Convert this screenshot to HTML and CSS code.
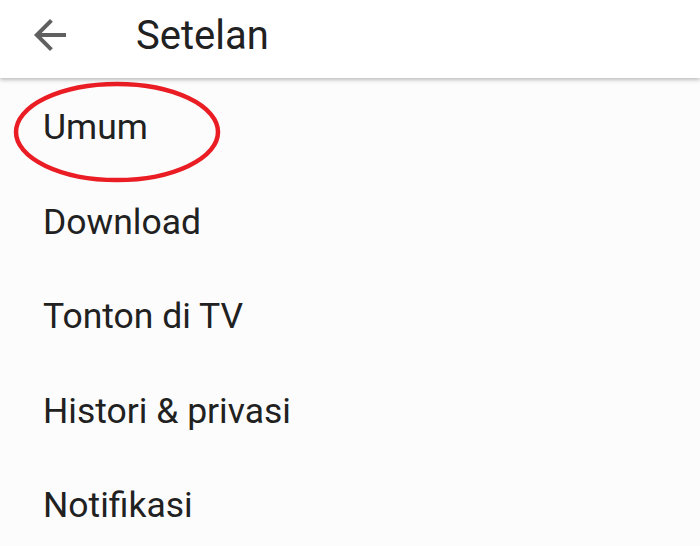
FILE: index.html
```html
<!DOCTYPE html>
<html>
    <head>
        <title>Setelan</title>
        <link rel="stylesheet" href="styles.css">
    </head>
    <body>
        <div class="topBar">
            <svg class="backIcon" viewBox="0 0 24 24"><path d="M20 11H7.83l5.59-5.59L12 4l-8 8 8 8 1.41-1.41L7.83 13H20v-2z"/></svg>
            <h1 class="pageTitle">Setelan</h1>
        </div>
        <div class="settingsList">
            <div class="settingItem">Umum</div>
            <div class="settingItem">Download</div>
            <div class="settingItem">Tonton di TV</div>
            <div class="settingItem">Histori &amp; privasi</div>
            <div class="settingItem">Notifikasi</div>
            <!-- red circle drawn over the first item -->
            <svg class="markCircle" viewBox="0 0 210 104"><ellipse cx="105" cy="52" rx="101" ry="48"/></svg>
        </div>
    </body>
</html>
```

FILE: styles.css
```css
body{
    margin:0;
    background:#fcfcfc;
    font-family:Roboto, "Liberation Sans", sans-serif;
    color:#212121;
    overflow:hidden;
}
.topBar{
    height:78px;
    background:white;
    display:flex;
    align-items:center;
    box-shadow:0 2px 4px rgba(0,0,0,0.25);
    position:relative;
    z-index:1;
}
.backIcon{
    width:48px;
    height:48px;
    fill:#606060;
    margin-left:26px;
    margin-bottom:8px;
}
.pageTitle{
    margin:0 0 8px 62px;
    font-size:40px;
    font-weight:normal;
    color:#212121;
}
.settingsList{
    position:relative;
    padding-top:2px;
}
.settingItem{
    height:94.5px;
    line-height:94.5px;
    font-size:35.5px;
    padding-left:43px;
}
.markCircle{
    position:absolute;
    left:12px;
    top:2px;
    width:210px;
    height:104px;
    fill:none;
    stroke:#ea1c24;
    stroke-width:4.5;
}
```
